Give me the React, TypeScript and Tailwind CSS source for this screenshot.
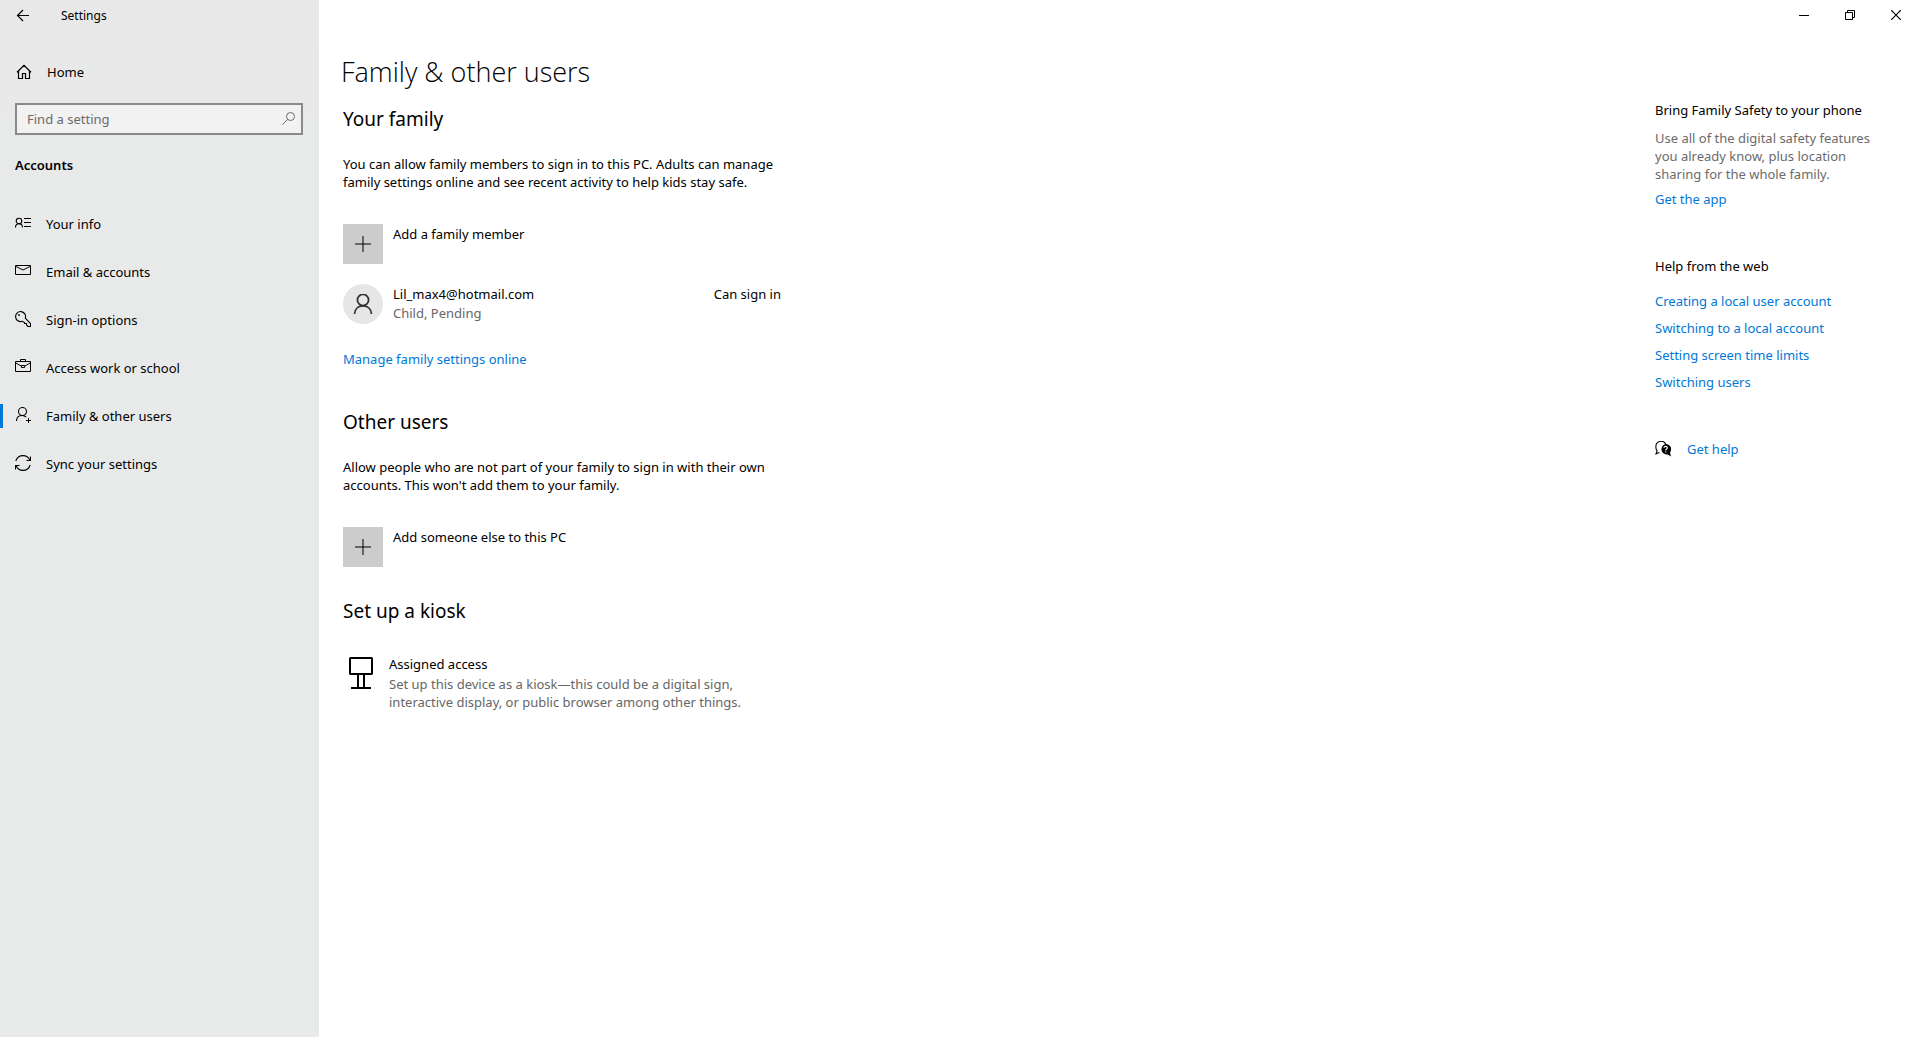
import type { ReactNode } from "react";

function Icon({ size = 16, children, className = "" }: { size?: number; children: ReactNode; className?: string }) {
  return (
    <svg
      width={size}
      height={size}
      viewBox={`0 0 ${size} ${size}`}
      fill="none"
      stroke="currentColor"
      strokeWidth="1"
      aria-hidden="true"
      className={`shrink-0 ${className}`}
    >
      {children}
    </svg>
  );
}

const BackIcon = () => (
  <Icon>
    <path d="M1.5 7.5H13M7 2L1.5 7.5L7 13" strokeWidth="1.2" />
  </Icon>
);

const HomeIcon = () => (
  <Icon>
    <path d="M1 8.2L8 1.3L15 8.2M2.5 7V14.5H6.5V9.5H9.5V14.5H13.5V7" strokeWidth="1.2" />
  </Icon>
);

const SearchIcon = () => (
  <Icon>
    <circle cx="9.5" cy="5.5" r="4" />
    <path d="M6.6 8.4L1.5 13.5" />
  </Icon>
);

const InfoIcon = () => (
  <Icon>
    <circle cx="4" cy="6" r="2.8" strokeWidth="1.1" />
    <path d="M0.5 12.5C0.5 10 2 8.8 4 8.8S7.5 10 7.5 12.5" strokeWidth="1.1" />
    <path d="M9 3.5H16M9 7.5H16M9 11.5H16" />
  </Icon>
);

const MailIcon = () => (
  <Icon>
    <path d="M0.5 2.5H15.5V11.5H0.5Z" />
    <path d="M1 3.5L8 7L15 3.5" />
  </Icon>
);

const KeyIcon = () => (
  <Icon>
    <path d="M10.3 7.2A5 5 0 1 0 7.2 10.3L9.5 11.5V12.5H11.5V14L13 15.5H15.5V12.5L10.3 7.2Z" strokeWidth="1.1" />
    <circle cx="4" cy="4" r="0.9" fill="currentColor" stroke="none" />
  </Icon>
);

const BriefcaseIcon = () => (
  <Icon>
    <path d="M0.5 2.5H15.5V12.5H0.5Z" />
    <path d="M5.5 2.5V0.5H10.5V2.5M1 4L6.5 7.3M9.5 7.3L15 4M6.5 6.5H9.5V8.5H6.5Z" />
  </Icon>
);

const FamilyIcon = () => (
  <Icon>
    <circle cx="7.5" cy="4.5" r="4" strokeWidth="1.1" />
    <path d="M1.5 14C1.5 10.5 4 8.5 7.2 8.5C9 8.5 10.3 9.2 11.2 10.2" strokeWidth="1.1" />
    <path d="M13.5 11V16M11 13.5H16" />
  </Icon>
);

const SyncIcon = () => (
  <Icon>
    <path d="M0.8 6C1.8 2.8 4.6 0.6 8 0.6C11 0.6 13.6 2.2 14.9 5M15.2 10C14.2 13.2 11.4 15.4 8 15.4C5 15.4 2.4 13.8 1.1 11" strokeWidth="1.1" />
    <path d="M15.5 1.5V5.5H11.5M0.5 14.5V10.5H4.5" strokeWidth="1.1" />
  </Icon>
);

const PersonIcon = () => (
  <Icon size={20}>
    <circle cx="10" cy="6" r="5.6" strokeWidth="1.8" />
    <path d="M1.5 20C1.8 15 5.2 11.8 10 11.8S18.2 15 18.5 20" strokeWidth="1.8" />
  </Icon>
);

const PlusIcon = () => (
  <Icon>
    <path d="M8 0V16M0 8H16" stroke="#666666" strokeWidth="2" />
    <path d="M7 8H9" stroke="#333333" strokeWidth="2" />
  </Icon>
);

const KioskIcon = () => (
  <svg width="24" height="32" viewBox="0 0 24 32" fill="none" stroke="#000" strokeWidth="2" aria-hidden="true" className="mt-0.5 shrink-0">
    <rect x="1" y="1" width="22" height="16" rx="0.5" />
    <path d="M9 17V31M15 17V31M2 31H22" />
  </svg>
);

const HelpIcon = () => (
  <Icon>
    <path d="M2.2 9.6L1 12.8L4.4 11.6M2.2 9.8A5.2 5.2 0 0 1 0.9 6A5.3 5.3 0 0 1 11 3.4" stroke="#000" strokeWidth="1.1" />
    <path d="M10.7 3A5.2 5.2 0 0 1 15 11.4L16 15.6L12.8 13.4A5.3 5.3 0 1 1 10.7 3Z" fill="#000" stroke="none" />
    <path d="M9 6.8C9 4.9 12.3 5 12.3 6.8C12.3 8.1 10.7 8.1 10.7 9.4M10.7 10.4V11.6" stroke="#fff" strokeWidth="1.2" />
  </Icon>
);

const navItems = [
  { label: "Your info", icon: <InfoIcon /> },
  { label: "Email & accounts", icon: <MailIcon /> },
  { label: "Sign-in options", icon: <KeyIcon /> },
  { label: "Access work or school", icon: <BriefcaseIcon /> },
  { label: "Family & other users", icon: <FamilyIcon />, active: true },
  { label: "Sync your settings", icon: <SyncIcon /> },
];

const helpLinks = [
  "Creating a local user account",
  "Switching to a local account",
  "Setting screen time limits",
  "Switching users",
];

function Sidebar() {
  return (
    <aside className="flex w-[319px] shrink-0 flex-col bg-linear-to-b from-[#e8e8e8] to-[#e8eaea] to-25%">
      <div className="flex h-[31px] items-center gap-[29px] pl-4">
        <button type="button" aria-label="Back">
          <BackIcon />
        </button>
        <span className="text-xs">Settings</span>
      </div>
      <a href="#home" className="mt-[17px] flex h-12 items-center gap-[15px] pl-4">
        <HomeIcon />
        Home
      </a>
      <div className="mt-[7px] mr-4 ml-[15px] flex h-8 items-center border-2 border-[#8a8a8a] bg-[#f2f2f2] pr-1 pl-2.5">
        <input
          type="text"
          aria-label="Find a setting"
          placeholder="Find a setting"
          className="min-w-0 flex-1 bg-transparent outline-none placeholder:text-[#6b6b6b]"
        />
        <button type="button" aria-label="Search" className="text-[#6b6b6b]">
          <SearchIcon />
        </button>
      </div>
      <h2 className="mt-[21px] pl-[15px] font-semibold">Accounts</h2>
      <nav className="mt-[26px]">
        {navItems.map((item) => (
          <a key={item.label} href="#" className="flex h-12 items-center">
            <span className={item.active ? "h-6 w-[3px] bg-[#0078d7]" : "h-6 w-[3px]"} />
            <span className="mr-[15px] mb-0.5 ml-3">{item.icon}</span>
            {item.label}
          </a>
        ))}
      </nav>
    </aside>
  );
}

function AddButton({ label }: { label: string }) {
  return (
    <button type="button" className="flex items-start gap-2.5 text-left">
      <span className="flex size-10 items-center justify-center bg-[#cccccc]">
        <PlusIcon />
      </span>
      <span className="pt-px">{label}</span>
    </button>
  );
}

function TitleBar() {
  return (
    <div className="flex h-8 items-start justify-end gap-3">
      <button type="button" aria-label="Minimize" className="flex h-[30px] w-[34px] items-center justify-center">
        <Icon size={10}>
          <path d="M0 5.5H10" />
        </Icon>
      </button>
      <button type="button" aria-label="Restore" className="flex h-[30px] w-[34px] items-center justify-center">
        <Icon size={10}>
          <path d="M0.5 2.5H7.5V9.5H0.5ZM2.5 2.5V0.5H9.5V7.5H7.5" />
        </Icon>
      </button>
      <button type="button" aria-label="Close" className="flex h-[30px] w-[34px] items-center justify-center">
        <Icon size={10}>
          <path d="M0 0L10 10M10 0L0 10" strokeWidth="1.2" />
        </Icon>
      </button>
    </div>
  );
}

export default function App() {
  return (
    <div className="flex min-h-screen bg-white font-['Noto_Sans','Open_Sans',sans-serif] text-[13px] leading-[18px] text-black">
      <Sidebar />
      <div className="flex min-w-0 flex-1 flex-col">
        <TitleBar />
        <div className="flex justify-between">
          <main className="w-[480px] pt-5 pl-6">
            <h1 className="-ml-0.5 font-['Open_Sans','Noto_Sans',sans-serif] text-[27px] leading-10 font-light">
              Family &amp; other users
            </h1>
            <h2 className="mt-[13px] text-[19px] leading-7">Your family</h2>
            <p className="mt-[22px]">
              You can allow family members to sign in to this PC. Adults can manage family settings online and see
              recent activity to help kids stay safe.
            </p>
            <div className="mt-[33px]">
              <AddButton label="Add a family member" />
            </div>
            <div className="mt-5 flex gap-2.5 pr-[18px]">
              <span className="flex size-10 items-center justify-center rounded-full bg-[#e6e6e6] text-[#333333]">
                <PersonIcon />
              </span>
              <div className="flex-1 pt-px">
                <div>Lil_max4@hotmail.com</div>
                <div className="mt-px text-[#666666]">Child, Pending</div>
              </div>
              <span className="pt-px">Can sign in</span>
            </div>
            <a href="#" className="mt-[26px] block text-[#0078d7]">
              Manage family settings online
            </a>
            <h2 className="mt-10 text-[19px] leading-7">Other users</h2>
            <p className="mt-[22px]">
              Allow people who are not part of your family to sign in with their own accounts. This won't add them to
              your family.
            </p>
            <div className="mt-[33px]">
              <AddButton label="Add someone else to this PC" />
            </div>
            <h2 className="mt-[30px] text-[19px] leading-7">Set up a kiosk</h2>
            <a href="#" className="mt-[30px] flex items-start gap-4 pl-1.5">
              <KioskIcon />
              <span>
                <span className="block">Assigned access</span>
                <span className="mt-0.5 block pr-12 text-[#666666]">
                  Set up this device as a kiosk—this could be a digital sign, interactive display, or public browser
                  among other things.
                </span>
              </span>
            </a>
          </main>
          <aside className="w-[258px] pt-[69px] pr-6">
            <h3>Bring Family Safety to your phone</h3>
            <p className="mt-[10px] text-[#6b6b6b]">
              Use all of the digital safety features you already know, plus location sharing for the whole family.
            </p>
            <a href="#" className="mt-[7px] block text-[#0078d7]">
              Get the app
            </a>
            <h3 className="mt-[49px]">Help from the web</h3>
            <ul className="mt-[17px] flex flex-col gap-[9px] text-[#0078d7]">
              {helpLinks.map((label) => (
                <li key={label}>
                  <a href="#">{label}</a>
                </li>
              ))}
            </ul>
            <a href="#" className="mt-[49px] flex items-center gap-4 text-[#0078d7]">
              <HelpIcon />
              Get help
            </a>
          </aside>
        </div>
      </div>
    </div>
  );
}
